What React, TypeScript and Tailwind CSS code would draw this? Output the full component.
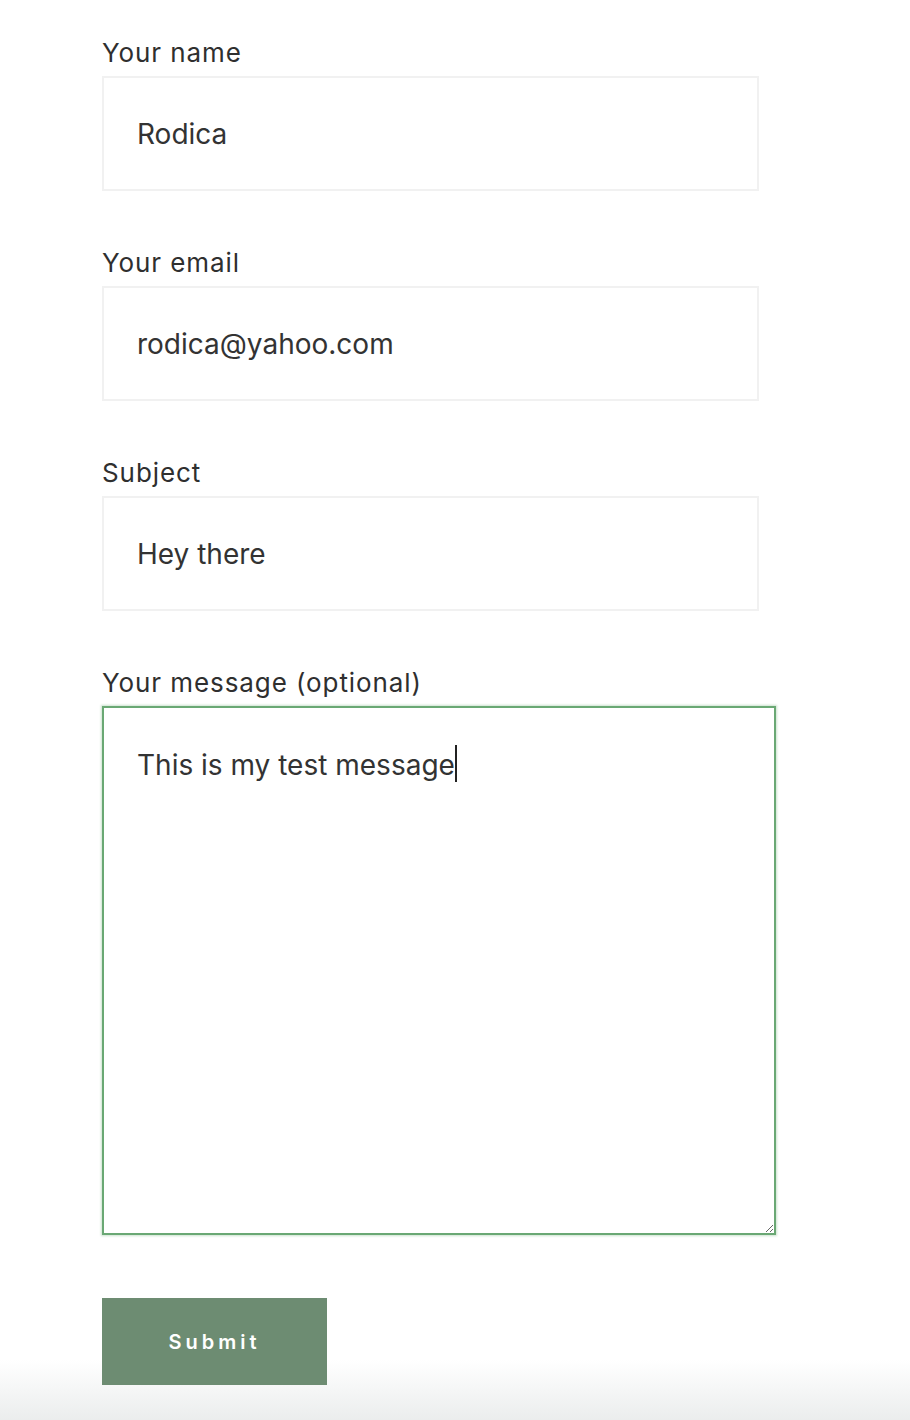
type FieldProps = {
    label: string;
    value: string;
};

function Field({ label, value }: FieldProps) {
    return (
        <div className="flex flex-col">
            <label className="text-[26px] leading-[34px] tracking-[0.035em] text-[#2f2f2f] mb-[6px]">{label}</label>
            <input
                type="text"
                readOnly
                value={value}
                className="w-[657px] h-[115px] border-2 border-[#f1f1f1] bg-white px-[33px] text-[28px] text-[#333] outline-none"
            />
        </div>
    );
}

export default function App() {
    return (
        <div
            className="min-h-[1420px] bg-[linear-gradient(to_bottom,#ffffff_1360px,#ebeded_1420px)] pl-[102px] pt-[36px] flex flex-col"
            style={{ fontFamily: "Inter, 'Open Sans', sans-serif" }}
        >
            <div className="flex flex-col gap-[55px]">
                <Field label="Your name" value="Rodica" />
                <Field label="Your email" value="rodica@yahoo.com" />
                <Field label="Subject" value="Hey there" />
                <div className="flex flex-col">
                    <label className="text-[26px] leading-[34px] tracking-[0.035em] text-[#2f2f2f] mb-[6px]">Your message (optional)</label>
                    <div className="relative w-[674px] h-[529px]">
                        <textarea
                            readOnly
                            value="This is my test message"
                            className="w-full h-full block border-2 border-[#6aa874] shadow-[0_0_2px_1px_rgba(106,168,116,0.35)] bg-white px-[33px] pt-[37px] text-[28px] leading-[40px] text-[#333] outline-none resize-y"
                        />
                        {/* caret */}
                        <span className="absolute left-[353px] top-[39px] w-[1.5px] h-[37px] bg-[#222]" />
                    </div>
                </div>
            </div>

            <button className="mt-[63px] w-[225px] h-[87px] bg-[#6d8c72] text-white text-[20px] font-semibold tracking-[0.2em] cursor-pointer">
                Submit
            </button>
        </div>
    );
}
